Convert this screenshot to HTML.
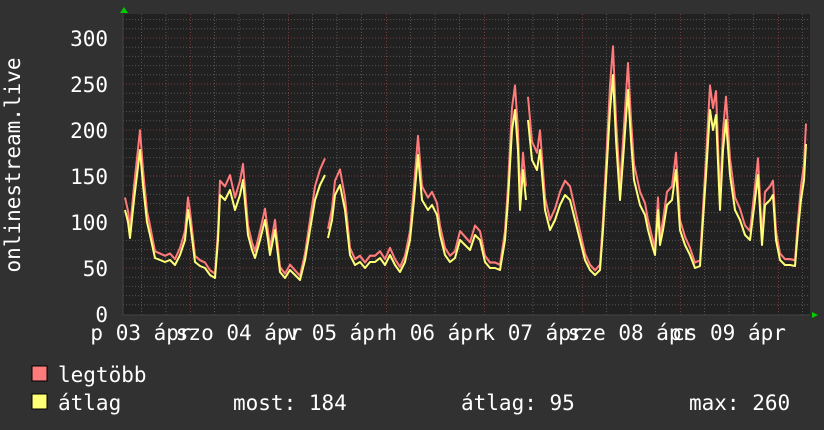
<!DOCTYPE html>
<html><head><meta charset="utf-8"><style>
html,body{margin:0;padding:0;background:#313131;}
svg{display:block}
text{font-family:"DejaVu Sans Mono","Liberation Mono",monospace;fill:#fff;font-size:21px}
</style></head><body>
<svg width="824" height="430" viewBox="0 0 824 430" xmlns="http://www.w3.org/2000/svg">
<rect width="824" height="430" fill="#313131"/>
<rect x="123" y="14" width="687" height="301" fill="#212121"/>
<g stroke="#555" stroke-width="1" stroke-dasharray="1,2">
<path d="M123 304.8H810M123 295.6H810M123 286.4H810M123 277.2H810M123 258.8H810M123 249.6H810M123 240.4H810M123 231.2H810M123 212.8H810M123 203.6H810M123 194.4H810M123 185.2H810M123 166.8H810M123 157.6H810M123 148.4H810M123 139.2H810M123 120.8H810M123 111.6H810M123 102.4H810M123 93.2H810M123 74.8H810M123 65.6H810M123 56.4H810M123 47.2H810M123 28.8H810M123 19.6H810"/>
<path d="M141.5 14V315M166 14V315M214.5 14V315M239 14V315M263.5 14V315M312.5 14V315M337 14V315M361.5 14V315M410.5 14V315M435 14V315M459.5 14V315M508.5 14V315M533 14V315M557.5 14V315M606.5 14V315M631 14V315M655.5 14V315M704.5 14V315M729 14V315M753.5 14V315M802.5 14V315"/>
</g>
<g stroke="#7a3a3a" stroke-width="1" stroke-dasharray="1,2">
<path d="M123 268H810M123 222H810M123 176H810M123 130H810M123 84H810M123 38H810"/>
<path d="M190.5 14V315M288.5 14V315M386.5 14V315M484.5 14V315M582.5 14V315M680.5 14V315M778.5 14V315"/>
</g>
<path d="M123 14V315H810" stroke="#444" fill="none"/>
<polygon points="120,13 124,7 128,13" fill="#0c0"/>
<polygon points="812,312 818,315 812,318" fill="#0c0"/>
<defs>
<path id="d" d="M125 210L128 222L130 238L134 200L137 175L140 150L143 185L147 222L150 235L155 258L160 260L165 262L170 260L175 265L180 255L185 240L188 210L190 222L195 262L200 266L205 268L210 275L215 278L218 240L220 195L225 200L230 190L235 210L240 195L243 180L248 235L252 250L255 258L260 240L265 220L268 240L270 255L275 230L280 272L285 278L290 270L295 275L300 280L305 260L310 230L315 200L320 185L325 175M328 238L332 220L335 195L340 185L345 210L350 255L355 265L360 262L365 268L370 262L375 262L380 258L385 265L390 255L395 265L400 272L405 262L410 240L414 200L418 155L422 200L428 210L432 205L437 215L440 235L445 255L450 262L455 258L460 240L465 245L470 250L475 235L480 240L485 262L490 268L495 268L500 270L505 240L508 200L512 130L515 110L518 150L520 210L523 170L526 200M528 120L532 160L537 170L540 150L545 210L550 230L555 220L560 205L565 195L570 200L575 220L580 240L585 260L590 270L595 275L600 270L603 230L606 180L610 110L613 75L616 140L620 200L623 160L628 90L631 140L634 180L640 205L645 215L648 230L652 245L655 255L658 210L660 245L663 230L667 205L672 200L676 170L680 230L685 245L690 255L695 268L700 266L703 220L706 175L710 110L713 130L716 115L720 210L723 150L726 120L730 175L735 210L740 220L745 235L750 240L755 200L758 175L762 245L765 205L770 200L773 195L776 240L780 260L785 265L790 265L795 266L798 230L801 200L804 180L806 144"/>
</defs>
<g fill="none" stroke-width="2" stroke-linejoin="round">
<use href="#d" stroke="#ff7a7a" transform="translate(0,314) scale(1,1.12) translate(0,-314)"/>
<use href="#d" stroke="#ffff77"/>
</g>
<g text-anchor="end">
<text x="108" y="46">300</text>
<text x="108" y="92">250</text>
<text x="108" y="138">200</text>
<text x="108" y="184">150</text>
<text x="108" y="230">100</text>
<text x="108" y="276">50</text>
<text x="108" y="322">0</text>
</g>
<text transform="translate(20,165) rotate(-90)" text-anchor="middle">onlinestream.live</text>
<g text-anchor="middle">
<text x="141" y="340">p 03 ápr</text>
<text x="239" y="340">szo 04 ápr</text>
<text x="337" y="340">v 05 ápr</text>
<text x="435" y="340">h 06 ápr</text>
<text x="533" y="340">k 07 ápr</text>
<text x="631" y="340">sze 08 ápr</text>
<text x="729" y="340">cs 09 ápr</text>
</g>
<rect x="32" y="366" width="15" height="15" fill="#ff7a7a" stroke="#000"/>
<rect x="32" y="394" width="15" height="15" fill="#ffff77" stroke="#000"/>
<text x="58" y="382">legtöbb</text>
<text x="58" y="410">átlag</text>
<text x="233" y="410">most: 184</text>
<text x="461" y="410">átlag: 95</text>
<text x="689" y="410">max: 260</text>
</svg>
</body></html>
